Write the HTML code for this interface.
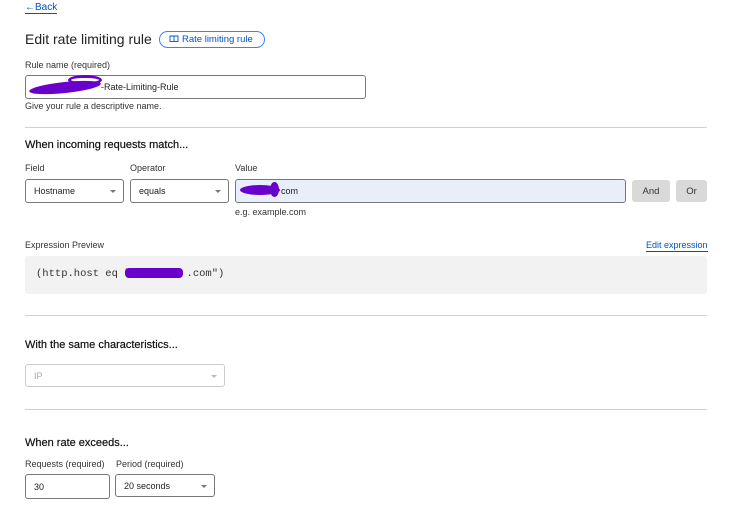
<!DOCTYPE html>
<html><head><meta charset="utf-8"><style>
*{margin:0;padding:0;box-sizing:border-box}
body{width:756px;height:515px;background:#fff;font-family:"Liberation Sans",sans-serif;color:#313131;position:relative;overflow:hidden}
.a{position:absolute;white-space:nowrap}
.lbl{font-size:9px;color:#333}
.h{font-size:11px;color:#111;-webkit-text-stroke:.2px #111}
.box{position:absolute;border:1px solid #777;border-radius:3px;background:#fff;font-size:9px;color:#222;padding-left:8px;display:flex;align-items:center}
.car{position:absolute;right:7px;top:50%;margin-top:-1px;border-left:3px solid transparent;border-right:3px solid transparent;border-top:3px solid #777}
.hr{position:absolute;left:25px;width:682px;height:1px;background:#d0d0d0}
.btn{position:absolute;background:#d9d9d9;border-radius:3px;font-size:9.5px;color:#333;display:flex;align-items:center;justify-content:center}
.blob{position:absolute;background:#6a00cc;border-radius:50%}
</style></head><body>
<div class="a" style="left:25px;top:2px;font-size:10px;color:#0051c3;border-bottom:1px solid #0051c3;line-height:11px">←Back</div>
<div class="a" style="left:25px;top:31px;font-size:14px;color:#222">Edit rate limiting rule</div>
<div class="a" style="left:159px;top:31px;width:106px;height:17px;border:1px solid #3b82f6;border-radius:9px;font-size:9.5px;color:#0051c3;padding-left:9px;line-height:15px">
<svg width="10" height="8" viewBox="0 0 10 8" style="vertical-align:-1px;margin-right:3px"><path d="M1 1h3.2q.8 0 .8.8V7q0-.6-.8-.6H1zM9 1H5.8q-.8 0-.8.8V7q0-.6.8-.6H9z" fill="none" stroke="#0051c3" stroke-width=".9"/></svg>Rate limiting rule</div>
<div class="a lbl" style="left:25px;top:60px">Rule name (required)</div>
<div class="box" style="left:25px;top:75px;width:341px;height:24px;padding-left:75px">-Rate-Limiting-Rule</div>
<div class="blob" style="left:29px;top:82px;width:72px;height:11px;transform:rotate(-6deg)"></div>
<div class="blob" style="left:68px;top:75px;width:34px;height:10px;background:none;border:3px solid #6a00cc"></div>
<div class="a lbl" style="left:25px;top:101px">Give your rule a descriptive name.</div>
<div class="hr" style="top:127px"></div>
<div class="a h" style="left:25px;top:139px">When incoming requests match...</div>
<div class="a lbl" style="left:25px;top:163px">Field</div>
<div class="a lbl" style="left:130px;top:163px">Operator</div>
<div class="a lbl" style="left:235px;top:163px">Value</div>
<div class="box" style="left:25px;top:179px;width:99px;height:24px">Hostname<span class="car"></span></div>
<div class="box" style="left:130px;top:179px;width:99px;height:24px">equals<span class="car"></span></div>
<div class="box" style="left:235px;top:179px;width:391px;height:24px;background:#e8effb;padding-left:45px">com</div>
<div class="blob" style="left:240px;top:185px;width:40px;height:10px"></div>
<div class="blob" style="left:270px;top:182px;width:9px;height:15px"></div>
<div class="btn" style="left:632px;top:180px;width:38px;height:22px">And</div>
<div class="btn" style="left:676px;top:180px;width:31px;height:22px">Or</div>
<div class="a lbl" style="left:235px;top:207px">e.g. example.com</div>
<div class="a lbl" style="left:25px;top:240px">Expression Preview</div>
<div class="a lbl" style="left:646px;top:240px;color:#0051c3;border-bottom:1px solid #0051c3;line-height:11px">Edit expression</div>
<div class="a" style="left:25px;top:256px;width:682px;height:38px;background:#f2f2f2;border-radius:3px"></div>
<div class="a" style="left:36px;top:268px;font-family:'Liberation Mono',monospace;font-size:10.5px;color:#333">(http.host eq "<span style="display:inline-block;width:56px"></span>.com")</div>
<div class="blob" style="left:125px;top:268px;width:58px;height:10px;border-radius:4px"></div>
<div class="hr" style="top:315px"></div>
<div class="a h" style="left:25px;top:339px">With the same characteristics...</div>
<div class="box" style="left:25px;top:364px;width:200px;height:23px;border-color:#ccc;color:#aaa">IP<span class="car" style="border-top-color:#bbb"></span></div>
<div class="hr" style="top:409px"></div>
<div class="a h" style="left:25px;top:437px">When rate exceeds...</div>
<div class="a lbl" style="left:25px;top:459px">Requests (required)</div>
<div class="a lbl" style="left:116px;top:459px">Period (required)</div>
<div class="box" style="left:25px;top:474px;width:85px;height:25px">30</div>
<div class="box" style="left:115px;top:474px;width:100px;height:23px">20 seconds<span class="car"></span></div>
</body></html>
